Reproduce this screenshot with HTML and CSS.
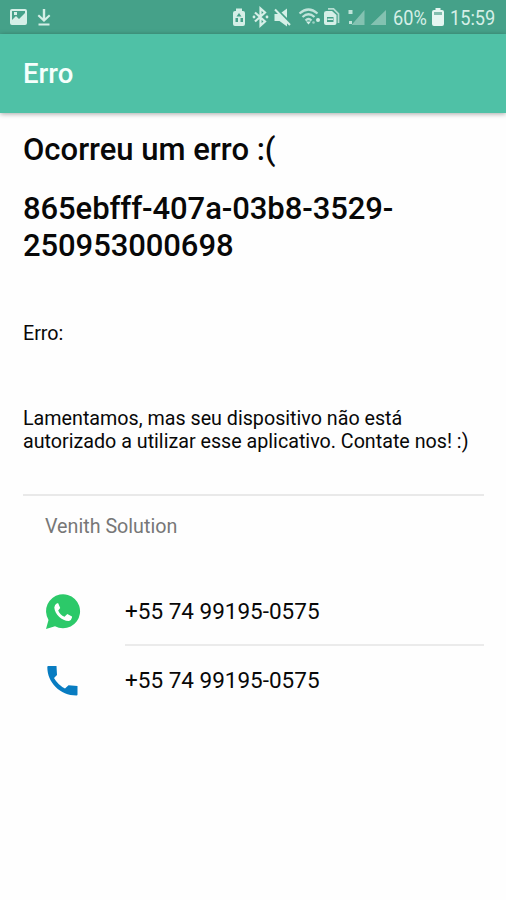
FILE: index.html
```html
<!DOCTYPE html>
<html lang="pt-BR">
<head>
<meta charset="utf-8">
<title>Erro</title>
<link rel="stylesheet" href="styles.css">
</head>
<body>
<div class="status">
  <svg class="status-icons" width="390" height="34" viewBox="0 0 390 34" fill="#d5efe7">
    <path fill-rule="evenodd" d="M12 9h13q2 0 2 2v12q0 2-2 2H12q-2 0-2-2V11q0-2 2-2zM12 11v9l4-4 3 3 6-6v-2zM14 12h3v3h-3z"/>
    <path d="M42.800 9h2.400v9l3.800-3.500 1.400 1.500L44 22l-6.400-6 1.400-1.500 3.800 3.500zM38.500 23.500h11v2h-11z"/>
    <path fill-rule="evenodd" d="M236 8.500h6V11h1q2 0 2 2v11q0 2-2 2h-8q-2 0-2-2V13q0-2 2-2h1zM239 13l-2.500 3.500h5zM235.500 18v4h2.500v-4zM240.500 18v4h2.500v-4z"/>
    <g fill="none" stroke="#d5efe7" stroke-width="2.200"><path d="M255 12.500l10 9-4.500 4V8.500l4.500 4-10 9"/></g>
    <circle cx="254" cy="17" r="1.400"/><circle cx="267" cy="17" r="1.400"/>
    <path d="M274.500 14h5l7.500-5.500v18L279.500 21h-5z"/>
    <path d="M275 8l16 16" stroke="#45a189" stroke-width="3"/>
    <path d="M275 9.500l15 15.500" stroke="#d5efe7" stroke-width="2"/>
    <g fill="none" stroke="#c0e4da" stroke-width="2.200"><path d="M299.500 13.500q9-8 18 0M302.500 17q6-5.500 12 0M305.500 20.500q3-3 6 0"/></g>
    <path d="M306 21.500h5l-2.500 3z"/><circle cx="313.500" cy="22.500" r="1.300" opacity=".6"/><circle cx="318" cy="20" r="2"/>
    <path d="M328 8.800h5.500l5 5V23" fill="none" stroke="#b5ddd1" stroke-width="1.700"/>
    <path fill-rule="evenodd" d="M326.500 11h5.500l4.500 4v8q0 2-2 2h-8.500q-2 0-2-2v-10q0-2 2.500-2zM327 17v5h6.500v-5z"/>
    <path d="M327.500 18.500h5.500v1.500h-5.500z"/>
    <path d="M348.500 10h4v4h-4zM349 21h3v3h-3z" opacity=".85"/>
    <path d="M364.500 10v15h-13zM386 10v15h-15.500z" fill="#83c2b1"/>
  </svg>
  <span class="percent">60%</span>
  <svg class="battery" width="12" height="18" viewBox="0 0 12 18"><path fill="#e5f6f1" d="M3.500 0h5v2H10q2 0 2 2v12q0 2-2 2H2q-2 0-2-2V4q0-2 2-2h1.500z"/><path fill="#82beae" d="M2 4h8v3H2z"/></svg>
  <span class="clock">15:59</span>
</div>
<header class="toolbar">Erro</header>
<main class="content">
  <h1 class="heading">Ocorreu um erro :(</h1>
  <h2 class="code">865ebfff-407a-03b8-3529-<br>250953000698</h2>
  <p class="label">Erro:</p>
  <p class="message">Lamentamos, mas seu dispositivo não está<br>autorizado a utilizar esse aplicativo. Contate nos! :)</p>
  <section class="contacts">
    <h3 class="company">Venith Solution</h3>
    <div class="row">
      <svg class="icon" width="36" height="36" viewBox="0 0 36 36"><path fill="#2cc969" d="M1 35l2.500-9A17 17 0 1 1 10 32.200z"/><path fill="#fff" d="M12 9.200Q9.500 10.800 9.300 13.500C9.800 20.500 17 27.200 24 27q2.500-.7 3-3.400v-1.200l-4.700-2.400-2.800 2.700c-3-1.200-5.200-3.300-6.300-6.200l2-2.600-2-4.700z"/></svg>
      <span class="number">+55 74 99195-0575</span>
    </div>
    <div class="row last">
      <svg class="icon" width="36" height="36" viewBox="0 0 36 36"><path fill="#087cc1" d="M2.800 3h8.700l.5 9-3 3Q13 22 20 25.500l3.500-3.200 9 .7v8.500q0 1-1 1C15 32.500 2.300 19.500 2.300 4z"/></svg>
      <span class="number">+55 74 99195-0575</span>
    </div>
  </section>
</main>
</body>
</html>
```
FILE: styles.css
```css
* { box-sizing: border-box; }
body { margin: 0; height: 900px; background: #fefefe; color: #080808; font-family: Roboto, "Liberation Sans", sans-serif; overflow: hidden; }
h1, h2, h3, p { margin: 0; font-weight: 400; white-space: nowrap; }
svg { display: block; flex: none; }
.status { height: 34px; display: flex; align-items: center; background: #45a189; color: #d5efe7; font-size: 20px; }
.percent, .clock { flex: none; transform: scaleX(.91); transform-origin: left; line-height: 34px; padding-top: 2px; }
.percent { width: 39px; margin-left: 3px; }
.battery { margin-right: 6px; }
.clock { width: 52px; }
.toolbar { height: 79px; padding: 0 23px; background: #4fc1a6; color: #f5fffc; font-size: 27.500px; font-weight: 500; line-height: 80px; box-shadow: 0 1px 5px rgba(0, 0, 0, .35); }
.content { padding: 18px 22px 0 23px; }
.heading { font-size: 31px; font-weight: 500; line-height: 37px; }
.code { margin-top: 22px; font-size: 31px; font-weight: 500; line-height: 37px; letter-spacing: -.08px; }
.label { margin-top: 58px; font-size: 19.700px; line-height: 23px; }
.message { margin-top: 62px; font-size: 19.700px; line-height: 23px; }
.contacts { margin-top: 41px; border-top: 2px solid #e9e9e9; padding-left: 22px; }
.company { height: 82px; padding-top: 19px; color: #777; font-size: 19.700px; line-height: 23px; }
.row { display: flex; align-items: center; height: 68px; }
.icon { margin-right: 44px; }
.number { flex: 1; height: 68px; border-bottom: 2px solid #ebebeb; font-size: 22.500px; line-height: 66px; }
.last { height: 70px; }
.last .number { height: 70px; border: 0; line-height: 68px; }
```
